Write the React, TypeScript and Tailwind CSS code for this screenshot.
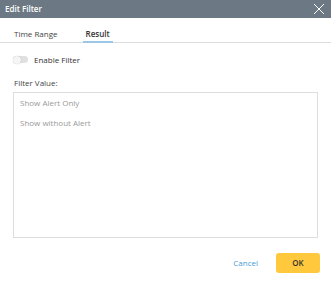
import { useState } from "react";

const TABS = ["Time Range", "Result"];
const OPTIONS = ["Show Alert Only", "Show without Alert"];

export default function App() {
  const [tab, setTab] = useState("Result");
  const [enabled, setEnabled] = useState(false);

  return (
    <div className="w-[331px] h-[285px] bg-white flex flex-col font-['Open_Sans',sans-serif] text-[#333]">
      <div className="h-[18px] bg-[#6c7984] flex items-center justify-between pl-[5px] pr-[6px]">
        <span className="text-[8px] font-semibold text-white">Edit Filter</span>
        <button aria-label="Close" className="text-white">
          <svg width="12" height="12" viewBox="0 0 12 12" fill="none" stroke="currentColor" strokeWidth={1}>
            <path d="M1 1l10 10M11 1L1 11" />
          </svg>
        </button>
      </div>

      <div className="flex gap-[25px] px-[14px] pt-[10px] border-b border-[#dcdcdc]">
        {TABS.map((t) => (
          <button
            key={t}
            onClick={() => setTab(t)}
            className={
              "text-[8px] leading-[11px] pb-[2px] border-b-2 -mb-px " +
              (tab === t ? "border-[#9cc6e6] font-semibold text-[#333] px-[3px]" : "border-transparent text-[#444]")
            }
          >
            {t}
          </button>
        ))}
      </div>

      <div className="flex items-center gap-[6px] px-[13px] mt-[11px]">
        <button
          onClick={() => setEnabled(!enabled)}
          className={"w-[15px] h-[7px] rounded-full relative " + (enabled ? "bg-[#9cc6e6]" : "bg-[#e0e0e0]")}
        >
          <span
            className={"absolute top-1/2 -translate-y-1/2 w-[8px] h-[8px] rounded-full bg-[#f5f5f5] shadow-[0_0_1px_rgba(0,0,0,0.3)] " + (enabled ? "right-0" : "left-0")}
          />
        </button>
        <span className="text-[8px] leading-[11px]">Enable Filter</span>
      </div>

      <div className="px-[13px] mt-[12px]">
        <div className="text-[8px] leading-[11px] text-[#444] mb-[4px] pl-px">Filter Value:</div>
        <div className="h-[146px] border border-[#dddddd] px-[6px]">
          {OPTIONS.map((o) => (
            <div key={o} className="text-[8px] text-[#999] h-[20px] flex items-center">
              {o}
            </div>
          ))}
        </div>
      </div>

      <div className="flex items-center justify-end gap-[18px] px-[11px] mt-[15px]">
        <button className="text-[8px] text-[#4a9bd8]">Cancel</button>
        <button className="w-[44px] h-[20px] rounded-[3px] bg-[#ffc83d] text-[8px] font-semibold text-[#333]">OK</button>
      </div>
    </div>
  );
}
